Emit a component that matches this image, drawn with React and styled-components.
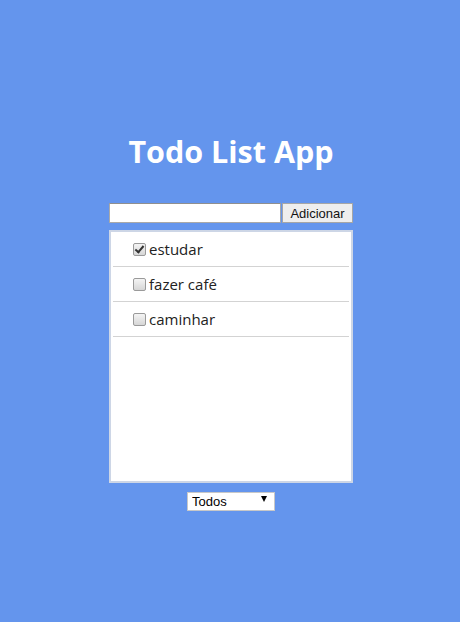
import React, { useState } from "react";
import styled, { createGlobalStyle } from "styled-components";

const GlobalStyle = createGlobalStyle`
  html, body {
    margin: 0;
    padding: 0;
    background: #6495ed;
    font-family: "Open Sans", "Liberation Sans", sans-serif;
  }
`;

const Page = styled.main`
  min-height: 622px;
  display: flex;
  flex-direction: column;
  align-items: center;
  padding: 130px 0 0 2px;
  box-sizing: border-box;
`;

const Title = styled.h1`
  margin: 0 0 31px;
  color: #fff;
  font-size: 30.5px;
  font-weight: 700;
  line-height: 42px;
`;

const Form = styled.form`
  display: flex;
  width: 244px;
  height: 20px;
  margin-bottom: 7px;
`;

const TextInput = styled.input`
  flex: 1;
  min-width: 0;
  height: 20px;
  box-sizing: border-box;
  margin: 0;
  padding: 1px 2px;
  border: 1px solid #a9a9a9;
  border-top-color: #8f8f8f;
  background: #fff;
  font: 13px "Liberation Sans", Arial, sans-serif;
  outline: none;
`;

const AddButton = styled.button`
  width: 71px;
  height: 20px;
  margin: 0 0 0 1px;
  padding: 0;
  box-sizing: border-box;
  border: 1px solid #a6a6a6;
  background: #eeeeee;
  color: #111;
  font: 13px "Liberation Sans", Arial, sans-serif;
`;

const ListBox = styled.ul`
  width: 244px;
  height: 253px;
  box-sizing: border-box;
  margin: 0;
  padding: 0 2px;
  list-style: none;
  background: #fff;
  border: 2px solid #cdd6e6;
`;

const Row = styled.li`
  height: 34px;
  display: flex;
  align-items: center;
  padding-left: 16px;
  border-bottom: 1px solid #d3d3d3;
  font-size: 15px;
  color: #222;
`;

const Check = styled.input.attrs({ type: "checkbox" })`
  appearance: none;
  position: relative;
  width: 13px;
  height: 13px;
  margin: 0 3px 0 4px;
  box-sizing: border-box;
  border: 1px solid #9a9a9a;
  border-radius: 2px;
  background: linear-gradient(#f4f4f4, #d6d6d6);

  &:checked::after {
    content: "";
    position: absolute;
    left: 3px;
    top: 0px;
    width: 3px;
    height: 7px;
    border: solid #333;
    border-width: 0 2px 2px 0;
    transform: rotate(40deg);
  }
`;

const Footer = styled.div`
  position: relative;
  margin-top: 6px;
  width: 88px;
  height: 19px;

  &::after {
    content: "";
    position: absolute;
    right: 8px;
    top: 7px;
    width: 0;
    height: 0;
    border-left: 3.5px solid transparent;
    border-right: 3.5px solid transparent;
    border-top: 6px solid #000;
    pointer-events: none;
  }
`;

const Filter = styled.select`
  appearance: none;
  width: 100%;
  height: 100%;
  margin: 0;
  padding: 0 4px;
  box-sizing: border-box;
  border: 1px solid #c8c8c8;
  border-radius: 0;
  background: #fff;
  color: #000;
  font: 13px "Liberation Sans", Arial, sans-serif;
`;

const initialTodos = [
  { id: 1, text: "estudar", done: true },
  { id: 2, text: "fazer café", done: false },
  { id: 3, text: "caminhar", done: false },
];

export default function App() {
  const [todos, setTodos] = useState(initialTodos);

  const toggle = (id) =>
    setTodos((list) => list.map((t) => (t.id === id ? { ...t, done: !t.done } : t)));

  return (
    <Page>
      <GlobalStyle />
      <Title>Todo List App</Title>
      <Form onSubmit={(e) => e.preventDefault()}>
        <TextInput type="text" />
        <AddButton type="submit">Adicionar</AddButton>
      </Form>
      <ListBox>
        {todos.map((todo) => (
          <Row key={todo.id}>
            <Check checked={todo.done} onChange={() => toggle(todo.id)} />
            {todo.text}
          </Row>
        ))}
      </ListBox>
      <Footer>
        <Filter defaultValue="todos">
          <option value="todos">Todos</option>
          <option value="feitos">Feitos</option>
          <option value="pendentes">Pendentes</option>
        </Filter>
      </Footer>
    </Page>
  );
}
